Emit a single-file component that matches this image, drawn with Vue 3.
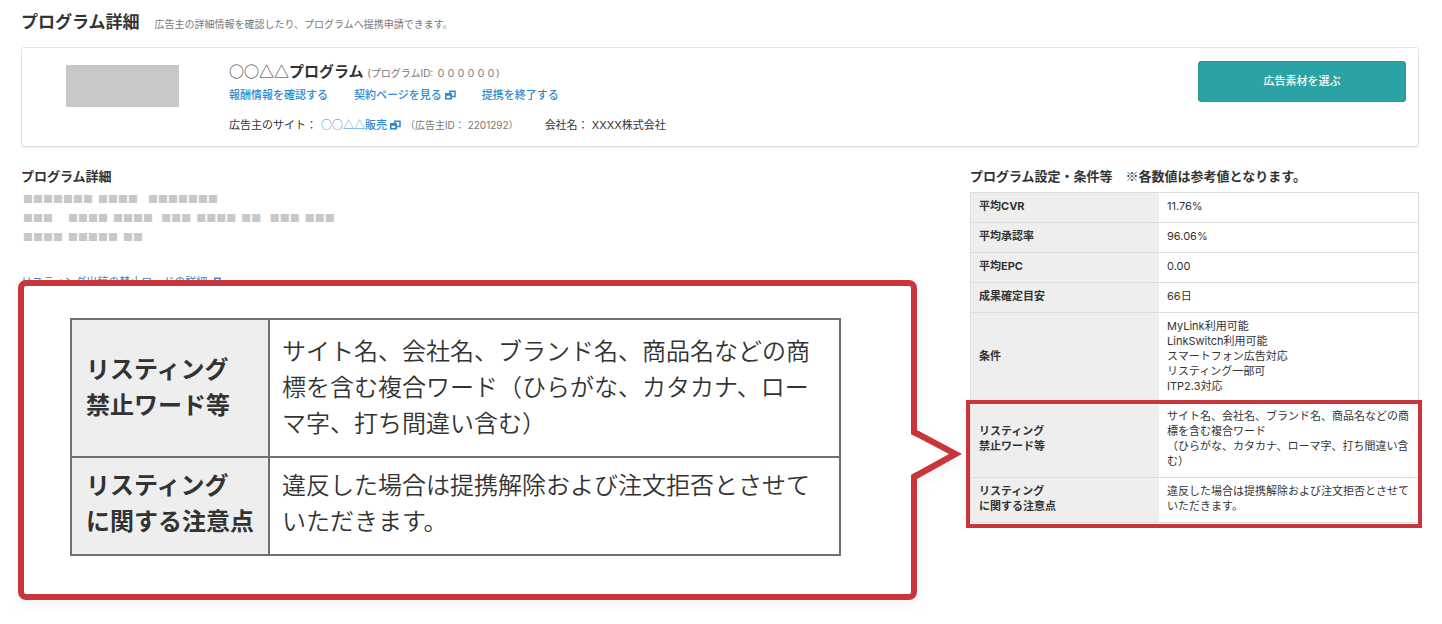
<script setup>
const settings = [
  { label: '平均CVR', lines: ['11.76%'] },
  { label: '平均承認率', lines: ['96.06%'] },
  { label: '平均EPC', lines: ['0.00'] },
  { label: '成果確定目安', lines: ['66日'] },
  {
    label: '条件',
    lines: ['MyLink利用可能', 'LinkSwitch利用可能', 'スマートフォン広告対応', 'リスティング一部可', 'ITP2.3対応'],
  },
]

const blocks = [
  '■■■■■■■\u2002■■■■\u2002\u2002■■■■■■■',
  '■■■\u2002\u2002\u2002■■■■\u2002■■■■\u2002\u2004■■■\u2002■■■■\u2002■■\u2002\u2004■■■\u2002■■■',
  '■■■■\u2002■■■■■\u2002■■',
]
</script>

<template>
  <main class="page">
    <header class="page-head">
      <h1>プログラム詳細</h1>
      <p>広告主の詳細情報を確認したり、プログラムへ提携申請できます。</p>
    </header>

    <section class="card">
      <div class="thumb"></div>
      <div class="info">
        <h2>
          <span class="marks">○○△△</span>プログラム
          <small>(プログラムID: ００００００)</small>
        </h2>
        <nav class="links">
          <a href="#">報酬情報を確認する</a>
          <a href="#">契約ページを見る
            <svg class="ext" viewBox="0 0 11 10" aria-hidden="true">
              <path class="back" d="M4.8 1.2h5.2v5.2H4.8z" />
              <path class="front" d="M0 3h7v6.6H0z" />
              <path class="hole" d="M1.6 5.8h3.6V8H1.6z" />
            </svg>
          </a>
          <a href="#">提携を終了する</a>
        </nav>
        <p class="site">
          <span>広告主のサイト：</span>
          <a href="#"><span class="marks">○○△△</span>販売
            <svg class="ext" viewBox="0 0 11 10" aria-hidden="true">
              <path class="back" d="M4.8 1.2h5.2v5.2H4.8z" />
              <path class="front" d="M0 3h7v6.6H0z" />
              <path class="hole" d="M1.6 5.8h3.6V8H1.6z" />
            </svg>
          </a>
          <small>（広告主ID： 2201292）</small>
          <span class="company">会社名： XXXX株式会社</span>
        </p>
      </div>
      <button type="button" class="choose">広告素材を選ぶ</button>
    </section>

    <div class="columns">
      <section class="detail">
        <h3>プログラム詳細</h3>
        <p v-for="(line, i) in blocks" :key="i" class="blocks">{{ line }}</p>
        <a href="#" class="listing">リスティング出稿の禁止ワードの詳細
          <svg class="ext" viewBox="0 0 11 10" aria-hidden="true">
            <path class="back" d="M4.8 1.2h5.2v5.2H4.8z" />
            <path class="front" d="M0 3h7v6.6H0z" />
            <path class="hole" d="M1.6 5.8h3.6V8H1.6z" />
          </svg>
        </a>
      </section>

      <section class="settings">
        <h3>プログラム設定・条件等　※各数値は参考値となります。</h3>
        <table>
          <tbody>
            <tr v-for="row in settings" :key="row.label">
              <th scope="row">{{ row.label }}</th>
              <td><div v-for="line in row.lines" :key="line">{{ line }}</div></td>
            </tr>
          </tbody>
          <tbody class="highlight">
            <tr>
              <th scope="row">リスティング<br />禁止ワード等</th>
              <td>サイト名、会社名、ブランド名、商品名などの商標を含む複合ワード<br />（ひらがな、カタカナ、ローマ字、打ち間違い含む）</td>
            </tr>
            <tr>
              <th scope="row">リスティング<br />に関する注意点</th>
              <td>違反した場合は提携解除および注文拒否とさせていただきます。</td>
            </tr>
          </tbody>
        </table>
      </section>
    </div>

    <aside class="callout">
      <table>
        <tbody>
          <tr>
            <th scope="row">リスティング<br />禁止ワード等</th>
            <td>サイト名、会社名、ブランド名、商品名などの商標を含む複合ワード（ひらがな、カタカナ、ローマ字、打ち間違い含む）</td>
          </tr>
          <tr>
            <th scope="row">リスティング<br />に関する注意点</th>
            <td>違反した場合は提携解除および注文拒否とさせていただきます。</td>
          </tr>
        </tbody>
      </table>
      <svg class="pointer" viewBox="0 0 52 50" aria-hidden="true">
        <path class="fill" d="M0 5l38 20L0 46z" />
        <path class="line" d="M6 1l45 24L6 50H0v-4l38-21L0 5V1z" />
      </svg>
    </aside>
  </main>
</template>

<style>
body {
  margin: 0;
  background: #fff;
}
</style>

<style scoped>
.page {
  position: relative;
  box-sizing: border-box;
  min-height: 100vh;
  padding: 10px 23px 24px 21px;
  font-family: Inter, "Noto Sans CJK JP", sans-serif;
  font-size: 11px;
  line-height: 15px;
  color: #333;
}
h1, h2, h3, p {
  margin: 0;
}
a {
  color: #2b8ad0;
  text-decoration: none;
}
small {
  font-size: 10px;
  font-weight: 400;
  color: #777;
}
.page-head {
  display: flex;
  align-items: baseline;
  gap: 15px;
}
h1 {
  font-size: 17px;
  line-height: 24px;
}
.page-head p {
  font-size: 10px;
  color: #777;
}
.card {
  display: flex;
  align-items: flex-start;
  margin-top: 13px;
  padding: 13px 12px 13px 44px;
  border: 1px solid #e2e2e2;
  border-radius: 3px;
  box-shadow: 0 1px 1px #eee;
}
.thumb {
  width: 113px;
  height: 42px;
  margin: 4px 50px 0 0;
  background: #c8c8c8;
}
.info {
  flex: 1;
}
h2 {
  font-size: 15px;
  line-height: 20px;
}
.marks {
  font-family: "Noto Sans CJK JP", sans-serif;
  font-weight: 400;
}
.links {
  display: flex;
  gap: 26px;
  margin-top: 5px;
  font-weight: 500;
}
.site {
  display: flex;
  align-items: baseline;
  gap: 4px;
  margin-top: 14px;
}
.site a {
  font-weight: 500;
}
.company {
  margin-left: 22px;
}
.ext {
  width: 11px;
  height: 10px;
  vertical-align: -1px;
}
.back {
  fill: none;
  stroke: #2b8ad0;
  stroke-width: 1.5;
}
.front {
  fill: #2b8ad0;
}
.hole {
  fill: #fff;
}
.choose {
  width: 208px;
  height: 41px;
  border: 1px solid #2a9497;
  border-radius: 3px;
  background: #2ba2a4;
  color: #fff;
  font: inherit;
  font-weight: 500;
}
.columns {
  display: grid;
  grid-template-columns: 1fr 449px;
  margin-top: 19px;
}
h3 {
  font-family: "Noto Sans CJK JP", sans-serif;
  font-size: 13px;
  line-height: 20px;
}
.blocks {
  padding-left: 2px;
  font-family: "Noto Sans CJK JP", sans-serif;
  font-size: 10px;
  line-height: 19px;
  color: #c8c8c8;
}
.detail h3 {
  margin-bottom: 3px;
}
.listing {
  display: inline-block;
  margin-top: 29px;
}
table {
  width: 100%;
  border-collapse: collapse;
}
.settings table {
  margin-top: 6px;
}
th {
  background: #eee;
  text-align: left;
}
.settings th,
.settings td {
  padding: 6px 9px 8px 8px;
  border-top: 1px solid #ddd;
  border-bottom: 1px solid #ddd;
}
.settings th {
  width: 171px;
  border-left: 1px solid #ddd;
}
.settings td {
  border-right: 1px solid #ddd;
}
.highlight {
  position: relative;
}
.highlight::after {
  content: "";
  position: absolute;
  inset: -3px -3px -5px -5px;
  border: 4px solid #c8363c;
}
.callout {
  position: absolute;
  top: 280px;
  left: 18px;
  right: 525px;
  padding: 32px 70px 38px 46px;
  border: 6px solid #c8363c;
  border-radius: 8px;
  background: #fff;
  filter: drop-shadow(0 6px 6px rgba(0, 0, 0, 0.04));
  font-family: "Noto Sans CJK JP", sans-serif;
  font-size: 24px;
  line-height: 36px;
}
.callout th,
.callout td {
  border: 2px solid #707070;
}
.callout th {
  width: 168px;
  padding: 8px 14px 12px;
  font-weight: 700;
  white-space: nowrap;
}
.callout td {
  padding: 12px 28px 16px 12px;
  font-weight: 350;
}
.callout tr + tr th,
.callout tr + tr td {
  padding-top: 8px;
  padding-bottom: 16px;
}
.pointer {
  position: absolute;
  top: 143px;
  right: -52px;
  width: 52px;
  height: 50px;
}
.fill {
  fill: #fff;
}
.line {
  fill: #c8363c;
}
</style>
